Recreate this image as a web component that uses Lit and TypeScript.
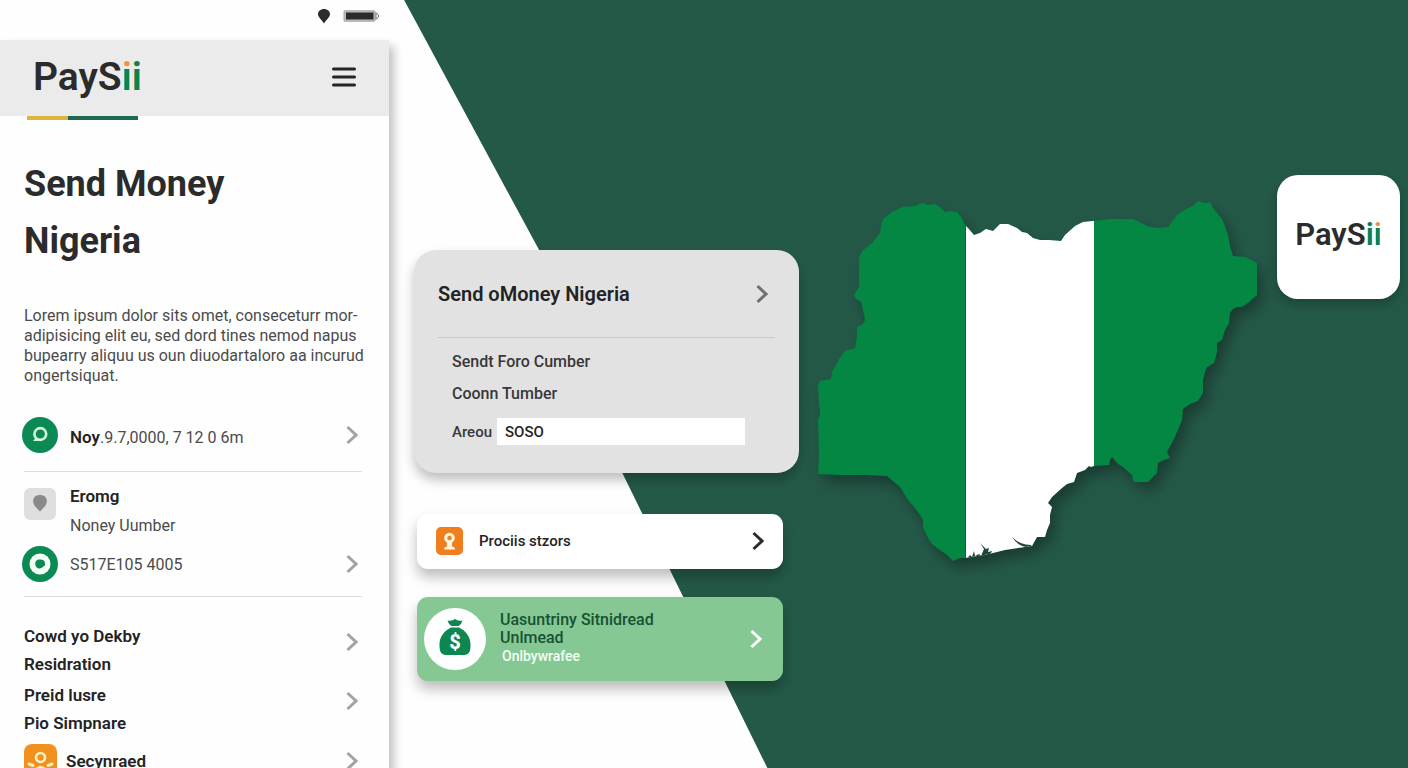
import { LitElement, html, css, svg } from "lit";
import { customElement, property } from "lit/decorators.js";

@customElement("pay-logo")
class PayLogo extends LitElement {
  /** Which of the two closing letters carries the orange dot. */
  @property() accent: "first" | "second" = "first";

  static styles = css`
    :host {
      display: inline-block;
      font-weight: 600;
      line-height: 1;
      color: #2b2b2c;
      white-space: nowrap;
    }
    .green,
    .dotted {
      color: #0b8250;
    }
    .dotted {
      color: transparent;
      background: linear-gradient(#ee9440 0 32%, #0b8250 32%);
      -webkit-background-clip: text;
      background-clip: text;
    }
  `;

  render() {
    const first = this.accent === "first";
    return html`<span>PayS</span><span class=${first ? "dotted" : "green"}>i</span
      ><span class=${first ? "green" : "dotted"}>i</span>`;
  }
}

const chevron = html`<svg class="chevron" viewBox="0 0 12 20" aria-hidden="true">
  <path d="M1.5 2 L10 10 L1.5 18" />
</svg>`;

const nigeria =
  "M965 225 962 218 957 212 950 211 945 212 940 207 935 204 928 205 922 203 915 206 903 207 892 212 883 219 881 226 880 233 872 243 862 251 859 258 859 287 854 295 856 299 861 302 864 315 865 320 863 324 857 327 857 336 855 348 845 351 839 359 835 367 832 371 831 379 820 381 818 386 819 403 820 414 818 420 819 455 818 474 841 475 865 475 887 476 900 487 908 500 914 507 920 515 923 520 923 527 928 538 932 544 937 548 947 555 953 561 960 558 965 558 971 557 984 555 993 553 1005 550 1018 548 1032 546 1037 537 1045 537 1047 530 1050 523 1050 515 1052 507 1048 503 1052 497 1062 488 1067 484 1074 482 1077 473 1085 470 1089 466 1091 467 1094 466 1109 465 1110 460 1112 457 1117 463 1123 467 1132 475 1133 480 1135 482 1148 482 1157 473 1158 463 1164 460 1170 458 1167 452 1173 441 1178 430 1182 420 1183 409 1190 404 1198 401 1203 393 1203 380 1205 372 1207 367 1214 363 1217 352 1217 343 1222 340 1225 330 1229 323 1230 313 1233 309 1237 307 1242 307 1248 303 1257 295 1257 263 1245 257 1233 256 1230 246 1228 235 1225 226 1222 219 1213 208 1210 202 1205 203 1198 201 1193 206 1184 210 1177 215 1168 227 1157 228 1147 226 1138 221 1133 219 1110 219 1093 221 1083 222 1075 226 1065 235 1061 241 1049 240 1040 240 1033 238 1027 233 1022 232 1017 228 1008 224 1000 224 993 231 986 229 980 233 974 235 968 228 Z";

@customElement("app-root")
class AppRoot extends LitElement {
  static styles = css`
    :host {
      display: grid;
      grid-template-columns: 389fr 410fr 609fr;
      position: relative;
      height: 100vh;
      overflow: hidden;
      background: #fefefe;
      font-family: Roboto, "Liberation Sans", sans-serif;
      color: #232324;
    }
    :host::before {
      content: "";
      position: absolute;
      inset: 0;
      background: #245948;
      clip-path: polygon(28.7% 0, 100% 0, 100% 100%, 54.5% 100%, 44.2% 61.6%, 38.3% 32.6%);
    }
    * {
      box-sizing: border-box;
    }
    h1,
    p {
      margin: 0;
    }
    a {
      color: inherit;
      text-decoration: none;
    }
    button {
      border: 0;
      padding: 0;
      background: none;
      font: inherit;
      color: inherit;
      text-align: left;
      cursor: pointer;
    }
    svg {
      display: block;
      flex: none;
    }
    .chevron {
      width: 12px;
      height: 20px;
      fill: none;
      stroke: #a3a3a4;
      stroke-width: 3;
    }

    .phone {
      position: relative;
      display: flex;
      flex-direction: column;
      min-width: 0;
    }
    .status {
      display: flex;
      justify-content: flex-end;
      align-items: center;
      gap: 12px;
      height: 40px;
      padding: 0 9px 9px 0;
    }
    .screen {
      flex: 1;
      background: #fefefe;
      box-shadow: 5px 6px 9px rgba(0, 0, 0, 0.24);
    }
    .top {
      display: flex;
      justify-content: space-between;
      align-items: center;
      height: 76px;
      padding: 0 33px 2px 33px;
      background: #ebebeb;
    }
    .top pay-logo {
      font-size: 39px;
    }
    .underline {
      width: 111px;
      height: 4px;
      margin-left: 27px;
      background: linear-gradient(90deg, #dcb53c 37%, #1d6a4c 37%);
    }
    .content {
      padding: 36px 27px 0 24px;
    }
    h1 {
      font-size: 36px;
      font-weight: 700;
      line-height: 57px;
      color: #2b2b2c;
    }
    .lines span {
      display: block;
      white-space: nowrap;
    }
    .intro {
      margin-top: 36px;
      font-size: 16px;
      line-height: 20px;
      color: #4b4b4c;
    }
    .row {
      display: flex;
      align-items: center;
      gap: 12px;
      width: 100%;
      font-size: 16px;
    }
    .row .text {
      flex: 1;
    }
    .row .chevron {
      margin-right: 4px;
    }
    .amount {
      margin-top: 31px;
      padding-bottom: 18px;
      border-bottom: 1px solid #dedede;
    }
    .amount .text {
      padding-top: 3px;
    }
    .badge {
      width: 36px;
      height: 36px;
      margin-left: -2px;
    }
    .number {
      color: #4b4b4c;
    }
    .contact {
      padding: 10px 0 14px;
      border-bottom: 1px solid #dedede;
    }
    .name {
      align-items: flex-start;
      line-height: 29px;
      padding-bottom: 6px;
    }
    .tile {
      width: 32px;
      height: 32px;
      margin: 6px 2px 0 0;
    }
    .strong {
      font-size: 17px;
      font-weight: 600;
      color: #232324;
    }
    .links {
      display: grid;
      gap: 3px;
      padding-top: 25px;
    }
    .links .row {
      align-items: flex-start;
      line-height: 28px;
    }
    .links .chevron {
      margin-top: 10px;
    }
    .links .last {
      align-items: center;
      gap: 9px;
      margin-top: 4px;
    }
    .last .chevron {
      margin-top: 0;
    }

    .middle {
      position: relative;
      padding: 250px 0 0 25px;
      min-width: 0;
    }
    .card {
      padding: 20px 24px 28px;
      border-radius: 22px;
      background: #e2e2e2;
      box-shadow: 0 7px 12px rgba(0, 0, 0, 0.25);
    }
    .card .heading {
      display: flex;
      justify-content: space-between;
      align-items: center;
      width: 100%;
      height: 68px;
      padding: 0 7px 20px 0;
      border-bottom: 1px solid #c9c9c9;
      font-size: 20px;
      font-weight: 600;
    }
    .card .chevron {
      stroke: #707071;
    }
    .fields {
      padding: 8px 30px 0 14px;
      font-size: 16px;
      font-weight: 500;
      line-height: 32px;
      color: #38383a;
    }
    .field {
      display: flex;
      align-items: center;
      gap: 5px;
      height: 27px;
      margin-top: 8px;
      font-size: 15px;
    }
    .field input {
      flex: 1;
      min-width: 0;
      height: 27px;
      padding: 0 8px;
      border: 0;
      background: #fff;
      font: inherit;
      color: #232324;
    }
    .action {
      display: flex;
      align-items: center;
      margin: 0 16px 0 3px;
      width: calc(100% - 19px);
      border-radius: 11px;
      box-shadow: 0 8px 13px rgba(0, 0, 0, 0.26);
    }
    .action .text {
      flex: 1;
    }
    .products {
      height: 55px;
      margin-top: 41px;
      padding: 0 19px 2px;
      gap: 16px;
      background: #fff;
      font-size: 15px;
      font-weight: 500;
    }
    .products .chevron {
      stroke: #2b2b2c;
    }
    .country {
      height: 84px;
      margin-top: 28px;
      padding: 0 21px 0 7px;
      gap: 14px;
      background: #85c893;
      font-size: 16px;
      font-weight: 500;
      line-height: 18px;
      color: #175233;
    }
    .country .text {
      padding-bottom: 3px;
    }
    .country .chevron {
      stroke: #fff;
    }
    .country .note {
      padding-left: 2px;
      font-size: 14px;
      color: #f3fff5;
    }

    .right {
      position: relative;
      display: flex;
      align-items: flex-start;
      gap: 20px;
      min-width: 0;
      padding: 175px 8px 0 19px;
    }
    .map {
      flex: 1;
      min-width: 0;
      margin-top: 26px;
      overflow: visible;
      filter: drop-shadow(5px 8px 7px rgba(20, 40, 35, 0.6));
    }
    .app-icon {
      display: grid;
      place-items: center;
      flex: none;
      width: 123px;
      height: 124px;
      padding-bottom: 6px;
      border-radius: 21px;
      background: #fff;
      box-shadow: 0 5px 12px rgba(0, 0, 0, 0.25);
    }
    .app-icon pay-logo {
      font-size: 31px;
    }
  `;

  render() {
    return html`
      <main class="phone">
        <div class="status">
          <svg width="14" height="16" viewBox="0 0 14 16" aria-hidden="true">
            <path fill="#2b2b2c" d="M7 1C3.400 1 1 3.300 1 6.200 1 9 4.500 11.500 7 15.500 9.500 11.500 13 9 13 6.200 13 3.300 10.600 1 7 1Z" />
          </svg>
          <svg width="37" height="12" viewBox="0 0 37 12" aria-hidden="true">
            <rect x="1" y=".8" width="31" height="10.400" rx="1" fill="#bdbdbd" stroke="#a5a5a5" />
            <rect x="3" y="2.500" width="27.500" height="7" fill="#2b2b2c" />
            <path d="M33 2.500 36 6 33 9.500Z" fill="#fff" stroke="#777" />
          </svg>
        </div>
        <div class="screen">
          <header class="top">
            <pay-logo></pay-logo>
            <button aria-label="Menu">
              <svg width="24" height="20" viewBox="0 0 24 20">
                <path stroke="#242425" stroke-width="3" stroke-linecap="round" d="M1.500 2H22.500M1.500 10H22.500M1.500 18H22.500" />
              </svg>
            </button>
          </header>
          <div class="underline"></div>
          <div class="content">
            <h1 class="lines"><span>Send Money</span><span>Nigeria</span></h1>
            <p class="intro lines">
              <span>Lorem ipsum dolor sits omet, conseceturr mor-</span>
              <span>adipisicing elit eu, sed dord tines nemod napus</span>
              <span>bupearry aliquu us oun diuodartaloro aa incurud</span>
              <span>ongertsiquat.</span>
            </p>
            <a class="row amount" href="#amount">
              <svg class="badge" viewBox="0 0 36 36" aria-hidden="true">
                <circle cx="18" cy="18" r="18" fill="#0b8a54" />
                <circle cx="18.300" cy="17" r="5.900" fill="none" stroke="#d6f7dc" stroke-width="2.600" />
                <path d="M11 24 14 20.500 17 24Z" fill="#d6f7dc" />
              </svg>
              <span class="text number"><span class="strong">Noy</span>.9.7,0000, 7 12 0 6m</span>
              ${chevron}
            </a>
            <section class="contact">
              <div class="row name">
                <svg class="tile" viewBox="0 0 32 32" aria-hidden="true">
                  <rect width="32" height="32" rx="6" fill="#dfdfdf" />
                  <path fill="#8a8a8b" d="M16 7C12 7 9.200 9 9.200 13 9.200 18 13 20 16 23.500 19 20 22.800 18 22.800 13 22.800 9 20 7 16 7Z" />
                </svg>
                <div class="text">
                  <p class="strong">Eromg</p>
                  <p class="number">Noney Uumber</p>
                </div>
              </div>
              <a class="row" href="#number">
                <svg class="badge" viewBox="0 0 36 36" aria-hidden="true">
                  <circle cx="18" cy="18" r="18" fill="#0b8a54" />
                  <circle cx="18" cy="18" r="10.500" fill="#f4fff6" />
                  <path fill="#0b8a54" d="M18 13.500C15 13 13 15 13.200 18 13.500 21.500 16 23 18.500 22.300 20 22 21 20.500 23 19.500 23.500 16 22 13 18 13.500Z" />
                </svg>
                <span class="text number">S517E105 4005</span>
                ${chevron}
              </a>
            </section>
            <nav class="links">
              <a class="row strong" href="#delivery">
                <span class="text lines"><span>Cowd yo Dekby</span><span>Residration</span></span>${chevron}
              </a>
              <a class="row strong" href="#simple">
                <span class="text lines"><span>Preid lusre</span><span>Pio Simpnare</span></span>${chevron}
              </a>
              <a class="row strong last" href="#secure">
                <svg width="33" height="33" viewBox="0 0 33 33" aria-hidden="true">
                  <rect width="33" height="33" rx="8" fill="#f0901f" />
                  <circle cx="16.500" cy="13.500" r="4.500" fill="none" stroke="#fff0c0" stroke-width="2.600" />
                  <path d="M5 20 9 21.500M28 20 24 21.500" stroke="#fff0c0" stroke-width="3" stroke-linecap="round" />
                  <path d="M8 27Q16.500 17 25 27Z" fill="#fff0c0" />
                </svg>
                <span class="text">Secynraed</span>${chevron}
              </a>
            </nav>
          </div>
        </div>
      </main>

      <section class="middle">
        <form class="card" @submit=${(e: Event) => e.preventDefault()}>
          <button class="heading" type="submit"><span>Send oMoney Nigeria</span>${chevron}</button>
          <div class="fields">
            <p>Sendt Foro Cumber</p>
            <p>Coonn Tumber</p>
            <div class="field">
              <label for="area">Areou</label>
              <input id="area" value="SOSO" />
            </div>
          </div>
        </form>
        <button class="action products">
          <svg width="27" height="28" viewBox="0 0 27 28" aria-hidden="true">
            <rect width="27" height="28" rx="5" fill="#ef7f1e" />
            <circle cx="13.500" cy="11" r="3.800" fill="none" stroke="#fff7df" stroke-width="3" />
            <path d="M11 15H16V19H11Z" fill="#fff7df" />
            <path d="M8 22.500Q8 19 13.500 19T19 22.500Z" fill="#fff7df" />
          </svg>
          <span class="text">Prociis stzors</span>
          ${chevron}
        </button>
        <button class="action country">
          <svg width="62" height="62" viewBox="0 0 62 62" aria-hidden="true">
            <circle cx="31" cy="31" r="31" fill="#fff" />
            <path fill="#0d8750" d="M23.500 12.500Q28 13.500 31 11 34 13.500 38.500 12.500 37.500 16.500 34.500 18H27.500Q24.500 16.500 23.500 12.500Z" />
            <path fill="#0d8750" d="M27 19.500H35C42 23 47 29 46.500 38 46.400 43.500 45 47 40 47H22C17 47 15.600 43.500 15.500 38 15 29 20 23 27 19.500Z" />
            <text x="31" y="40.500" text-anchor="middle" font-size="20" font-weight="800" fill="#fff">$</text>
          </svg>
          <span class="text lines">
            <span>Uasuntriny Sitnidread</span>
            <span>Unlmead</span>
            <span class="note">Onlbywrafee</span>
          </span>
          ${chevron}
        </button>
      </section>

      <section class="right">
        <svg class="map" viewBox="818 201 439 360" role="img" aria-label="Nigeria">
          <defs>
            <clipPath id="land"><path d=${nigeria} /></clipPath>
          </defs>
          <g clip-path="url(#land)">
            ${svg`<rect x="818" y="201" width="440" height="361" fill="#048743" />
            <rect x="965.500" y="201" width="128.500" height="361" fill="#fff" />
            <rect x="965" y="201" width="1" height="361" fill="#1c5c3c" />`}
            <path
              fill="#20463b"
              d="M966 560 970 555 972 557 974 551 975 556 979 554 981 556 984 549 980 543 986 549 989 548 988 552 992 551 990 555 996 553ZM1012 537Q1020 545 1031 545L1032 547H1026Q1018 546 1012 537Z"
            />
          </g>
        </svg>
        <div class="app-icon"><pay-logo accent="second"></pay-logo></div>
      </section>
    `;
  }
}
